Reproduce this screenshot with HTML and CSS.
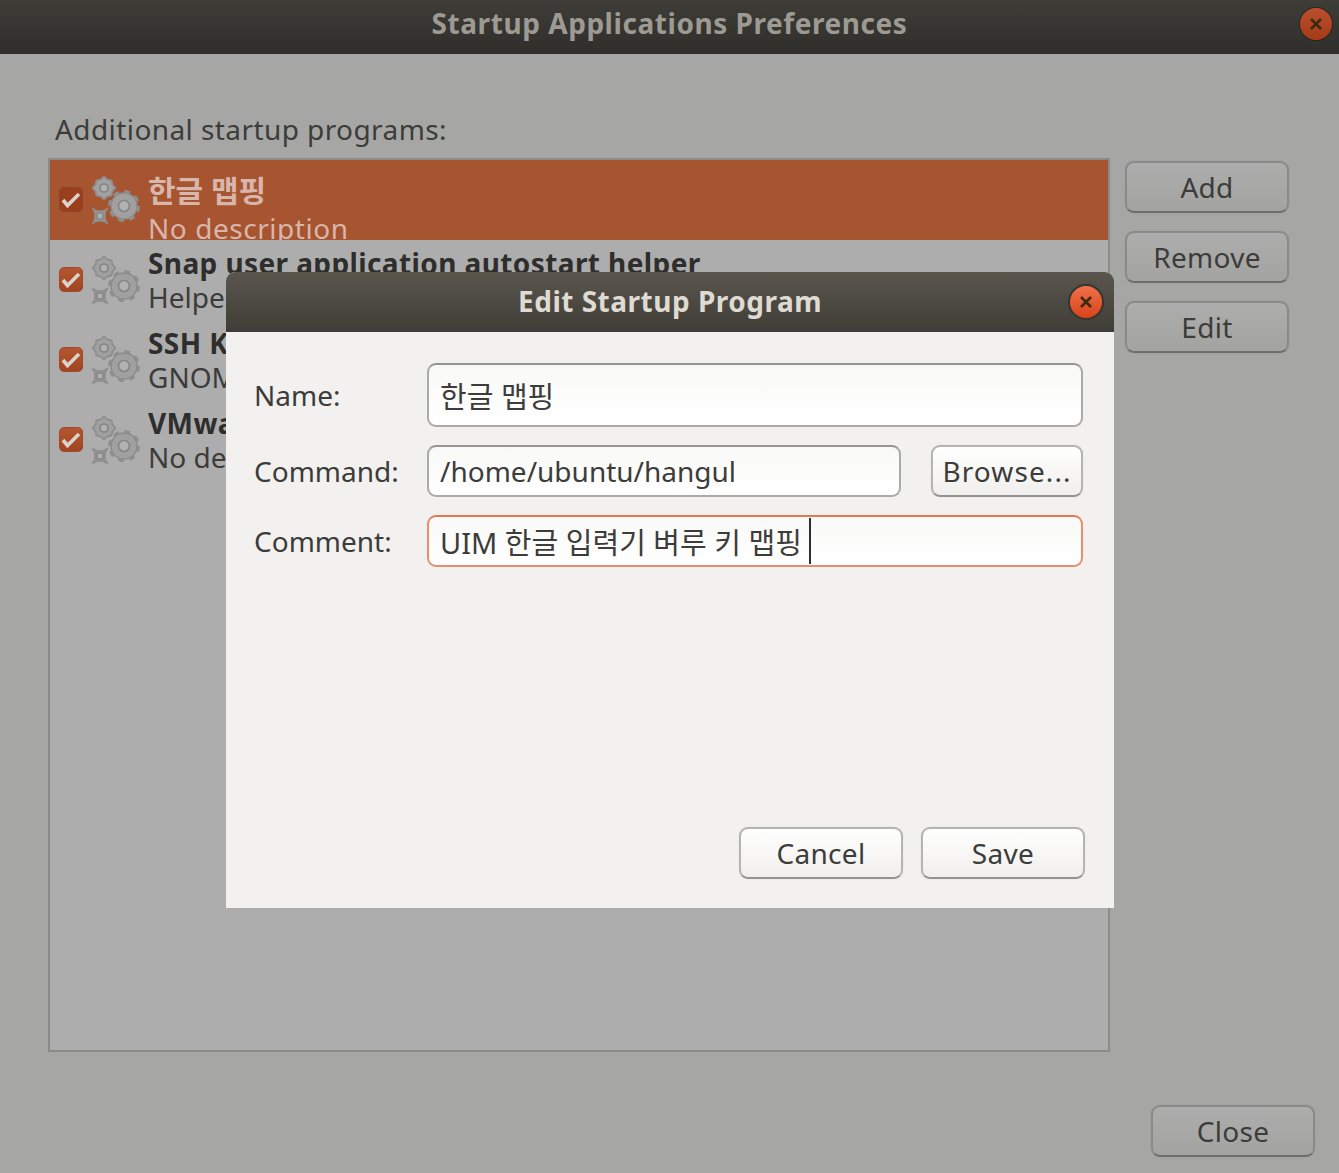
FILE: index.html
```html
<!DOCTYPE html>
<html lang="ko">
<head>
<meta charset="utf-8">
<title>Startup Applications Preferences</title>
<link rel="stylesheet" href="styles.css">
</head>
<body>
<svg class="defs" width="0" height="0" aria-hidden="true">
  <symbol id="gears" viewBox="0 0 48 48">
    <path class="g-top" d="M12 0.500 15.500 3.500 19.500 4.500 20.500 8.500 23.500 12 20.500 15.500 19.500 19.500 15.500 20.500 12 23.500 8.500 20.500 4.500 19.500 3.500 15.500 0.500 12 3.500 8.500 4.500 4.500 8.500 3.500Z"/>
    <circle class="g-hole" cx="12" cy="12" r="4"/>
    <circle class="g-teeth" cx="32" cy="30" r="14"/>
    <circle class="g-body" cx="32" cy="30" r="13"/>
    <circle class="g-hole g-hole-big" cx="32" cy="30" r="5.500"/>
    <path class="g-top" d="M1 33 5 35h6l4-2-2 4v6l2 4-4-2H5l-4 2 2-4v-6z"/>
    <rect class="g-hole-square" x="5" y="37" width="6" height="6"/>
  </symbol>
  <symbol id="check" viewBox="0 0 22 22">
    <path class="check-mark" d="M3 11 7.500 16.500 19 5"/>
  </symbol>
</svg>

<div class="window">
  <header class="titlebar titlebar-back">
    <h1 class="title">Startup Applications Preferences</h1>
    <button class="wm-close wm-close-back" aria-label="Close window">
      <svg viewBox="0 0 12 12" class="wm-x"><path d="M1 1 11 11M11 1 1 11"/></svg>
    </button>
  </header>

  <main class="main">
    <div class="section-label">Additional startup programs:</div>
    <div class="list-area">
      <div class="list">
        <div class="row row-selected">
          <span class="checkbox"><svg class="check"><use href="#check"/></svg></span>
          <svg class="gears"><use href="#gears"/></svg>
          <div class="row-text">
            <div class="row-title row-title-ko">한글 맵핑</div>
            <div class="row-sub row-sub-wide">No description</div>
          </div>
        </div>
        <div class="row">
          <span class="checkbox"><svg class="check"><use href="#check"/></svg></span>
          <svg class="gears"><use href="#gears"/></svg>
          <div class="row-text">
            <div class="row-title">Snap user application autostart helper</div>
            <div class="row-sub">Helper</div>
          </div>
        </div>
        <div class="row">
          <span class="checkbox"><svg class="check"><use href="#check"/></svg></span>
          <svg class="gears"><use href="#gears"/></svg>
          <div class="row-text">
            <div class="row-title">SSH Key</div>
            <div class="row-sub">GNOME</div>
          </div>
        </div>
        <div class="row">
          <span class="checkbox"><svg class="check"><use href="#check"/></svg></span>
          <svg class="gears"><use href="#gears"/></svg>
          <div class="row-text">
            <div class="row-title">VMware</div>
            <div class="row-sub">No description</div>
          </div>
        </div>
      </div>
      <div class="side">
        <button class="btn btn-back">Add</button>
        <button class="btn btn-back">Remove</button>
        <button class="btn btn-back">Edit</button>
      </div>
    </div>
    <div class="main-footer">
      <button class="btn btn-back">Close</button>
    </div>
  </main>
</div>

<section class="dialog">
  <header class="titlebar titlebar-dialog">
    <h2 class="dialog-title">Edit Startup Program</h2>
    <button class="wm-close wm-close-dialog" aria-label="Close dialog">
      <svg viewBox="0 0 12 12" class="wm-x"><path d="M1 1 11 11M11 1 1 11"/></svg>
    </button>
  </header>
  <div class="dialog-body">
    <div class="form">
      <label class="form-label">Name:</label>
      <div class="field field-tall field-wide"><span class="ko">한글 맵핑</span></div>
      <label class="form-label">Command:</label>
      <div class="command-row">
        <div class="field field-command">/home/ubuntu/hangul</div>
        <button class="btn btn-browse">Browse...</button>
      </div>
      <label class="form-label">Comment:</label>
      <div class="field field-focus field-wide"><span class="ko">UIM 한글 입력기 벼루 키 맵핑</span><span class="caret"></span></div>
    </div>
    <div class="dialog-actions">
      <button class="btn">Cancel</button>
      <button class="btn">Save</button>
    </div>
  </div>
</section>
</body>
</html>
```
FILE: styles.css
```css
* { box-sizing: border-box; }
html, body { margin: 0; padding: 0; }
body {
  width: 1339px;
  height: 1173px;
  overflow: hidden;
  position: relative;
  background: #a6a6a4;
  font-family: "Noto Sans", "Noto Sans CJK KR", sans-serif;
  font-size: 28px;
  color: #3c3c3a;
}
.defs { position: absolute; }
.window { display: flex; flex-direction: column; height: 1173px; }

.titlebar {
  display: flex;
  align-items: center;
  justify-content: center;
  position: relative;
  flex: none;
}
.titlebar-back {
  height: 54px;
  background: linear-gradient(#3e3d38, #2f2e2a);
}
.title {
  margin: 0 0 8px;
  font-size: 28px;
  font-weight: 700;
  line-height: 38px;
  letter-spacing: 0.55px;
  color: #9c9a92;
}
.wm-close {
  position: absolute;
  width: 32px;
  height: 32px;
  padding: 0;
  border: 0;
  border-radius: 50%;
  display: flex;
  align-items: center;
  justify-content: center;
}
.wm-close-back {
  left: 1300px;
  top: 8px;
  background: linear-gradient(#bb4f2e, #a53a16);
  box-shadow: 0 0 0 1px #26251f;
}
.wm-close-dialog {
  left: 844px;
  top: 14px;
  background: linear-gradient(#f0714a, #d8431a);
  box-shadow: 0 0 0 2px #37352f;
}
.wm-x { width: 12px; height: 12px; }
.wm-x path { fill: none; stroke: #3a2a14; stroke-width: 2.6; }

.main {
  flex: 1;
  display: flex;
  flex-direction: column;
  padding: 59px 24px 16px 48px;
}
.section-label {
  margin: 0 0 13px 7px;
  height: 32px;
  line-height: 32px;
  letter-spacing: 0.42px;
}
.list-area { display: flex; height: 894px; }
.list {
  width: 1062px;
  height: 894px;
  border: 2px solid #8b8b87;
  background: #adadad;
}
.row {
  height: 80px;
  overflow: hidden;
  display: flex;
  align-items: flex-start;
  padding-left: 9px;
}
.row-selected { background: #a75431; color: #d8b6ab; }
.checkbox {
  flex: none;
  width: 24px;
  height: 25px;
  margin-top: 27px;
  border-radius: 5px;
  background: linear-gradient(#b55630, #a2451f);
  border: 1px solid #9a4d2e;
  display: flex;
  align-items: center;
  justify-content: center;
}
.row-selected .checkbox { background: #993f1e; border-color: #8e4529; }
.check { width: 22px; height: 22px; }
.check-mark { fill: none; stroke: #dcd2cb; stroke-width: 3.6; }
.gears { flex: none; width: 48px; height: 48px; margin: 16px 0 0 9px; }
.g-top { fill: #a0a0a0; stroke: #8c8c8c; stroke-width: 1.6; }
.g-hole { fill: #b2b2b2; stroke: #848484; stroke-width: 1.6; }
.g-teeth { fill: none; stroke: #8f8f8f; stroke-width: 4; stroke-dasharray: 5.500 5.500; }
.g-body { fill: #a0a0a0; stroke: #8c8c8c; stroke-width: 1.4; }
.g-hole-square { fill: #b0b0b0; stroke: #848484; stroke-width: 1.4; }
.row-selected .g-hole { fill: #b09080; }
.row-selected .g-hole-square { fill: #a86442; }
.row-text { margin-left: 8px; padding-top: 6px; width: 78px; white-space: nowrap; overflow: hidden; }
.row:first-child .row-text,
.row:nth-child(2) .row-text { width: 600px; }
.row-title { height: 35px; line-height: 35px; font-weight: 700; color: #2e2e2c; letter-spacing: 0.4px; }
.row-sub { height: 35px; line-height: 35px; margin-top: -1px; }
.row-selected .row-text { padding-top: 11px; }
.row-selected .row-title { color: #d8b6ab; letter-spacing: 0; }
.row-title-ko { height: 41px; line-height: 39px; font-size: 30px; }
.row-sub-wide { color: #d8b6ab; letter-spacing: 0.55px; }
.row:nth-child(2) .row-sub { width: 78px; overflow: hidden; }

.side {
  display: flex;
  flex-direction: column;
  gap: 18px;
  margin: 3px 0 0 15px;
  width: 164px;
}
.btn {
  width: 164px;
  height: 52px;
  padding: 0;
  border: 2px solid #b4b4b2;
  border-bottom-color: #929290;
  border-radius: 9px;
  background: linear-gradient(#ffffff, #f0efed);
  box-shadow: 0 0 1px rgba(0, 0, 0, 0.2);
  font: inherit;
  letter-spacing: 0.3px;
  color: #3c3c3a;
}
.btn-back {
  border-color: #8a8a88;
  border-bottom-color: #6e6e6c;
  background: linear-gradient(#adadad, #a3a3a1);
}
.main-footer { display: flex; justify-content: flex-end; margin-top: 53px; }

.dialog {
  position: absolute;
  left: 226px;
  top: 272px;
  width: 888px;
  height: 636px;
  display: flex;
  flex-direction: column;
  background: #f2f1ef;
  border-radius: 9px 9px 0 0;
}
.titlebar-dialog {
  height: 60px;
  border-radius: 9px 9px 0 0;
  background: linear-gradient(#5a564e, #3f3d37);
}
.dialog-title {
  margin: 0 0 2px;
  font-size: 28px;
  font-weight: 700;
  line-height: 38px;
  letter-spacing: 0.5px;
  color: #dfdbd2;
}
.dialog-body {
  flex: 1;
  display: flex;
  flex-direction: column;
  padding: 31px 29px 29px 28px;
}
.form {
  display: grid;
  grid-template-columns: 173px 656px;
  grid-template-rows: 64px 52px 52px;
  row-gap: 18px;
  align-items: center;
}
.field {
  height: 100%;
  display: flex;
  align-items: center;
  padding-left: 11px;
  border: 2px solid #aaaaa8;
  border-top-color: #949492;
  border-radius: 9px;
  background: linear-gradient(#f9f9f8, #ffffff);
  white-space: nowrap;
}
.ko { font-size: 29px; }
.field-focus { border-color: #e88e6e; border-top-color: #dd7a56; }
.command-row { display: flex; justify-content: space-between; height: 100%; }
.field-command { width: 474px; }
.btn-browse { width: 152px; letter-spacing: 1.1px; }
.caret {
  width: 2px;
  height: 46px;
  margin-left: 7px;
  background: #2e2e2c;
  flex: none;
}
.dialog-actions {
  margin-top: auto;
  display: flex;
  justify-content: flex-end;
  gap: 18px;
}
```
